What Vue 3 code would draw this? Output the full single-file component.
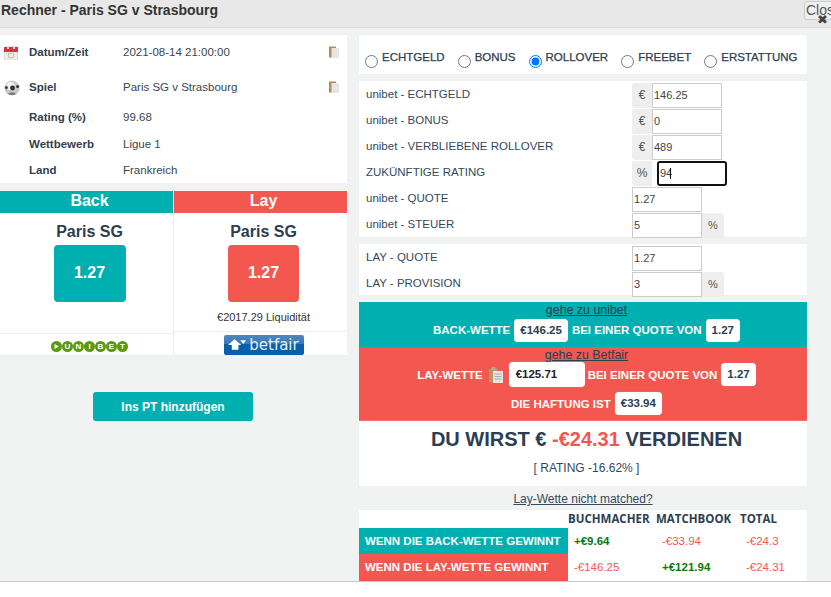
<template>
  <div class="page">
    <div class="modal">
      <header class="head">
        <h1 class="title">Rechner - Paris SG v Strasbourg</h1>
        <button class="close">Close</button>
        <span class="close-x">✖</span>
      </header>

      <div class="content">
        <div class="left">
          <section class="card info">
            <div v-for="row in infoRows" :key="row.label" :class="['info-row', row.cls]">
              <span class="info-icon">
                <svg v-if="row.icon === 'cal'" width="14" height="14" viewBox="0 0 14 14">
                  <rect x="0.5" y="1" width="13" height="13" fill="#eeeae6" stroke="#ccc" stroke-width="0.6" />
                  <rect x="0" y="1" width="14" height="5" fill="#d8333c" />
                  <rect x="3" y="0" width="2" height="3" fill="#f3d4d4" />
                  <rect x="9" y="0" width="2" height="3" fill="#f3d4d4" />
                  <rect x="4.5" y="7.5" width="5" height="4" fill="none" stroke="#bbb" stroke-width="0.8" />
                </svg>
                <svg v-if="row.icon === 'ball'" width="16" height="16" viewBox="0 0 16 16">
                  <circle cx="8" cy="8" r="7.5" fill="#c9c9c9" />
                  <circle cx="6.5" cy="6" r="4" fill="#f1f1f1" />
                  <circle cx="8.5" cy="8" r="2.4" fill="#2e2e2e" />
                  <circle cx="2.4" cy="7.4" r="1.5" fill="#3a3a3a" />
                  <circle cx="13.6" cy="6.5" r="1.6" fill="#3a3a3a" />
                  <path d="M4 14 Q8 16 12 14 L10 12.4 H6 Z" fill="#777" />
                </svg>
              </span>
              <span class="info-label">{{ row.label }}</span>
              <span class="info-value">{{ row.value }}</span>
              <svg v-if="row.copy" class="copy" width="10" height="12" viewBox="0 0 10 12">
                <rect x="0" y="0.5" width="7" height="11" fill="#b58a61" />
                <rect x="2.5" y="2" width="7.5" height="10" fill="#e6e6e6" />
              </svg>
            </div>
          </section>

          <section class="bets">
            <div class="bet">
              <div class="bet-head back">Back</div>
              <div class="bet-body">
                <div class="bet-team">Paris SG</div>
                <div class="odd back">1.27</div>
              </div>
              <div class="bet-logo">
                <div class="unibet">
                  <svg width="11" height="11" viewBox="0 0 11 11" class="uni-play">
                    <circle cx="5.5" cy="5.5" r="5.5" fill="#5a9a0c" />
                    <path d="M3.5 3 L8 5.5 L3.5 8 Z" fill="#fff" />
                  </svg>
                  <span v-for="(ch, i) in 'UNIBET'" :key="i" class="uni-dot">{{ ch }}</span>
                </div>
              </div>
            </div>
            <div class="bet">
              <div class="bet-head lay">Lay</div>
              <div class="bet-body">
                <div class="bet-team">Paris SG</div>
                <div class="odd lay">1.27</div>
                <div class="liq">€2017.29 Liquidität</div>
              </div>
              <div class="bet-logo">
                <div class="betfair">
                  <svg width="19" height="12" viewBox="0 0 20 12">
                    <path d="M0 6 L7 0 L14 6 H11 V11 H4 V6 Z" fill="#fff" />
                    <path d="M13 1 H19 L16 5 Z" fill="#fff" />
                  </svg>
                  <span>betfair</span>
                </div>
              </div>
            </div>
          </section>

          <div class="add-wrap">
            <button class="add">Ins PT hinzufügen</button>
          </div>
        </div>

        <div class="right">
          <section class="card radios">
            <label v-for="t in types" :key="t" class="radio">
              <input type="radio" name="type" :checked="t === 'ROLLOVER'" />
              <span>{{ t }}</span>
            </label>
          </section>

          <section class="card form">
            <div v-for="f in bookieFields" :key="f.label" class="form-row">
              <span class="form-label">{{ f.label }}</span>
              <div class="group">
                <span v-if="f.pre" class="addon pre">{{ f.pre }}</span>
                <span v-if="f.focus" class="focus-wrap">
                  <input class="field focused" :value="f.value" />
                  <i class="caret"></i>
                </span>
                <input v-else class="field" :value="f.value" />
                <span v-if="f.post" class="addon post">{{ f.post }}</span>
              </div>
            </div>
          </section>

          <section class="card form lay-form">
            <div v-for="f in layFields" :key="f.label" class="form-row">
              <span class="form-label">{{ f.label }}</span>
              <div class="group">
                <input class="field" :value="f.value" />
                <span v-if="f.post" class="addon post">{{ f.post }}</span>
              </div>
            </div>
          </section>

          <section class="band back-band">
            <a class="go">gehe zu unibet</a>
            <div class="band-line">
              <span>BACK-WETTE</span>
              <b class="pill">€146.25</b>
              <span>BEI EINER QUOTE VON</span>
              <b class="pill">1.27</b>
            </div>
          </section>

          <section class="band lay-band">
            <a class="go">gehe zu Betfair</a>
            <div class="band-line">
              <span>LAY-WETTE</span>
              <svg class="clip" width="14" height="16" viewBox="0 0 14 16">
                <rect x="0" y="1.5" width="9" height="14" fill="#c2915f" />
                <rect x="2.5" y="0" width="4" height="3" fill="#a9a9a9" />
                <rect x="4" y="4" width="10" height="12" fill="#e4e6e6" />
                <path d="M5.5 7 H12.5 M5.5 9.5 H12.5 M5.5 12 H12.5" stroke="#a8acac" stroke-width="1" />
              </svg>
              <b class="pill wide">€125.71</b>
              <span>BEI EINER QUOTE VON</span>
              <b class="pill">1.27</b>
            </div>
            <div class="band-line liab">
              <span>DIE HAFTUNG IST</span>
              <b class="pill">€33.94</b>
            </div>
          </section>

          <section class="result">
            <div class="earn">DU WIRST € <span class="neg">-€24.31</span> VERDIENEN</div>
            <div class="rating">[ RATING -16.62% ]</div>
          </section>

          <a class="unmatched">Lay-Wette nicht matched?</a>

          <section class="outcomes">
            <div class="o-head"></div>
            <div class="o-head">BUCHMACHER</div>
            <div class="o-head">MATCHBOOK</div>
            <div class="o-head">TOTAL</div>

            <div class="o-label back">WENN DIE BACK-WETTE GEWINNT</div>
            <div class="o-val pos">+€9.64</div>
            <div class="o-val neg">-€33.94</div>
            <div class="o-val neg">-€24.3</div>

            <div class="o-label lay">WENN DIE LAY-WETTE GEWINNT</div>
            <div class="o-val neg">-€146.25</div>
            <div class="o-val pos">+€121.94</div>
            <div class="o-val neg">-€24.31</div>
          </section>
        </div>
      </div>
    </div>
  </div>
</template>

<script setup>
const infoRows = [
  { label: 'Datum/Zeit', value: '2021-08-14 21:00:00', icon: 'cal', copy: true, cls: 'tall' },
  { label: 'Spiel', value: 'Paris SG v Strasbourg', icon: 'ball', copy: true, cls: 'tall' },
  { label: 'Rating (%)', value: '99.68', cls: 'third' },
  { label: 'Wettbewerb', value: 'Ligue 1' },
  { label: 'Land', value: 'Frankreich' },
]

const types = ['ECHTGELD', 'BONUS', 'ROLLOVER', 'FREEBET', 'ERSTATTUNG']

const bookieFields = [
  { label: 'unibet - ECHTGELD', value: '146.25', pre: '€' },
  { label: 'unibet - BONUS', value: '0', pre: '€' },
  { label: 'unibet - VERBLIEBENE ROLLOVER', value: '489', pre: '€' },
  { label: 'ZUKÜNFTIGE RATING', value: '94', pre: '%', focus: true },
  { label: 'unibet - QUOTE', value: '1.27' },
  { label: 'unibet - STEUER', value: '5', post: '%' },
]

const layFields = [
  { label: 'LAY - QUOTE', value: '1.27' },
  { label: 'LAY - PROVISION', value: '3', post: '%' },
]
</script>

<style>
html,
body {
  margin: 0;
  background: #fff;
  overflow: hidden;
}
</style>

<style scoped>
.page {
  width: 831px;
  height: 597px;
  overflow: hidden;
  background: #fff;
  font-family: 'Liberation Sans', Arial, sans-serif;
  font-size: 11.5px;
  color: #2c3e50;
}

.modal {
  height: 582px;
  overflow: hidden;
  background: #f1f3f3;
  border-bottom: 1px solid #c8c8c8;
  box-sizing: border-box;
}

.head {
  position: relative;
  display: flex;
  height: 28px;
  box-sizing: border-box;
  background: #e8e8e8;
  border-bottom: 1px solid #dcdcdc;
}

.title {
  width: 804px;
  flex: none;
  margin: 0;
  padding: 1px 0 0 1px;
  box-sizing: border-box;
  font-size: 14px;
  line-height: 18px;
  font-weight: bold;
  color: #333;
}

.close {
  flex: none;
  width: 50px;
  height: 19px;
  margin-top: 1px;
  padding: 0 1px;
  text-align: left;
  font-family: 'Liberation Sans', Arial, sans-serif;
  font-size: 14px;
  line-height: 17px;
  color: #555;
  background: #f0f0f0;
  border: 1px solid #ccc;
  border-radius: 3px;
}

.close-x {
  position: absolute;
  left: 817px;
  top: 13px;
  font-family: 'DejaVu Sans', sans-serif;
  font-size: 13px;
  line-height: 14px;
  color: #444;
}

.content {
  display: flex;
  gap: 12px;
  padding-top: 7px;
}

.left {
  width: 347px;
  flex: none;
}

.right {
  width: 448px;
  flex: none;
}

.card {
  background: #fff;
  box-sizing: border-box;
  box-shadow: 0 0 1px #e3e5e5;
}

.info {
  height: 148px;
  margin-bottom: 8px;
}

.info-row {
  position: relative;
  display: flex;
  align-items: center;
  height: 26px;
  padding-left: 29px;
  color: #34495e;
}

.info-row.tall {
  height: 35px;
}

.info-row.third {
  margin-bottom: 1px;
}

.info-icon {
  position: absolute;
  left: 4px;
  top: 50%;
  transform: translateY(-50%);
  display: flex;
}

.info-label {
  width: 94px;
  padding-bottom: 2px;
  font-weight: bold;
  color: #333f4d;
}

.info-value {
  padding-bottom: 2px;
  color: #3a4654;
}

.copy {
  position: absolute;
  left: 329px;
  top: 11px;
}

.bets {
  display: flex;
  gap: 1px;
  background: #eceeee;
  height: 165px;
}

.bet {
  display: flex;
  flex-direction: column;
  width: 173px;
  background: #fff;
}

.bet-head {
  height: 22px;
  line-height: 20px;
  margin-bottom: 2px;
  padding-left: 6px;
  text-align: center;
  font-size: 16px;
  font-weight: bold;
  color: #fff;
}

.back {
  background: #00afaf;
}

.lay {
  background: #f4574f;
}

.bet-body {
  height: 119px;
  box-sizing: border-box;
  padding: 8px 0 0 6px;
  border-bottom: 1px solid #eceeee;
  display: flex;
  flex-direction: column;
  align-items: center;
}

.bet-team {
  font-size: 16px;
  line-height: 18px;
  font-weight: bold;
  color: #2c3e50;
}

.odd {
  width: 72px;
  height: 57px;
  margin-top: 4px;
  line-height: 55px;
  border-radius: 4px;
  text-align: center;
  font-size: 16px;
  font-weight: bold;
  color: #fff;
}

.odd.lay {
  width: 71px;
}

.liq {
  margin-top: 8px;
  font-size: 11px;
  line-height: 14px;
  color: #333;
}

.bet-logo {
  flex: 1;
  display: flex;
  justify-content: center;
  align-items: center;
  padding-left: 6px;
  border-bottom: 1px solid #eceeee;
}

.unibet {
  display: flex;
  width: 78px;
  height: 12px;
  margin-top: 4px;
  justify-content: center;
  align-items: center;
}

.uni-play {
  flex: none;
}

.uni-dot {
  width: 11px;
  height: 11px;
  line-height: 11px;
  flex: none;
  border-radius: 50%;
  text-align: center;
  background: #5a9a0c;
  color: #fff;
  font-size: 8px;
  font-weight: bold;
}

.betfair {
  display: flex;
  align-items: center;
  justify-content: center;
  gap: 2px;
  width: 80px;
  height: 20px;
  margin-top: 3px;
  border-radius: 2px;
  background: linear-gradient(#4f87bd 0, #3a79b6 45%, #0a5dab 46%);
  color: #e6f0fa;
  line-height: 20px;
  font-family: 'DejaVu Sans', sans-serif;
}

.betfair span {
  font-size: 15px;
}

.add-wrap {
  display: flex;
  justify-content: center;
  padding: 36px 1px 0 0;
}

.add {
  width: 160px;
  height: 29px;
  border: 0;
  border-radius: 3px;
  background: #00afaf;
  color: #fff;
  font-family: 'Liberation Sans', Arial, sans-serif;
  font-size: 12px;
  font-weight: bold;
}

.radios {
  display: flex;
  height: 39px;
  padding: 16px 0 0 6px;
  margin-bottom: 7px;
}

.radio {
  display: flex;
  align-items: flex-start;
  margin-right: 13px;
  color: #2c3e50;
  -webkit-text-stroke: 0.25px #2c3e50;
}

.radio input {
  width: 13px;
  height: 13px;
  margin: 4px 4px 0 0;
}

.form {
  height: 156px;
  padding-top: 1px;
  margin-bottom: 7px;
}

.form.lay-form {
  height: 51px;
}

.form-row {
  display: flex;
  align-items: center;
  height: 26px;
}

.form-label {
  width: 273px;
  flex: none;
  padding: 0 0 3px 7px;
  box-sizing: border-box;
  color: #34495e;
}

.group {
  display: flex;
  align-items: stretch;
  height: 25px;
}

.addon {
  width: 20px;
  display: flex;
  align-items: center;
  justify-content: center;
  background: #eee;
  color: #555;
  font-size: 11px;
  border-radius: 3px 0 0 3px;
}

.addon.pre {
  font-size: 12px;
}

.addon.post {
  width: 22px;
  border-radius: 0 3px 3px 0;
}

.field {
  width: 70px;
  height: 25px;
  padding: 0 1px;
  margin: 0;
  box-sizing: border-box;
  border: 1px solid #ccc;
  font-family: 'Liberation Sans', Arial, sans-serif;
  font-size: 11px;
  color: #444;
  background: #fff;
  outline: none;
}

.focus-wrap {
  position: relative;
  display: flex;
  margin-left: 5px;
}

.field.focused {
  border: 2px solid #111;
  border-radius: 3px;
}

.caret {
  position: absolute;
  left: 13px;
  top: 7px;
  width: 1px;
  height: 11px;
  background: #111;
}

.band {
  padding-left: 7px;
  text-align: center;
  color: #fff;
  font-weight: bold;
}

.back-band {
  height: 45px;
  background: #00afaf;
}

.lay-band {
  height: 74px;
  background: #f4574f;
}

.go {
  display: block;
  padding-top: 2px;
  height: 13px;
  line-height: 13px;
  font-size: 12.4px;
  color: #2c3e50;
  font-weight: normal;
  text-decoration: underline;
}

.band-line {
  display: flex;
  justify-content: center;
  align-items: center;
  gap: 4px;
  height: 26px;
  color: #fff;
}

.lay-band .band-line {
  height: 25px;
}

.lay-band .liab {
  height: 33px;
}

.pill {
  display: block;
  padding: 0 6px;
  height: 23px;
  line-height: 23px;
  background: #fff;
  border-radius: 4px;
  color: #2c3e50;
  box-shadow: 0 0 1px #9fb2b2;
}

.pill.wide {
  width: 76px;
  height: 25px;
  line-height: 25px;
  box-sizing: border-box;
  padding: 0 0 0 7px;
  text-align: left;
  color: #222;
  margin-right: -1px;
}

.clip {
  margin-left: 2px;
  margin-right: 2px;
}

.result {
  height: 65px;
  padding-left: 7px;
  background: #fff;
  text-align: center;
  box-shadow: 0 0 1px #e3e5e5;
}

.earn {
  padding-top: 5px;
  font-size: 20px;
  line-height: 27px;
  font-weight: bold;
  color: #2c3e50;
}

.neg {
  color: #f4574f;
}

.pos {
  color: #0a7a0a;
  font-weight: bold;
}

.rating {
  padding-top: 8px;
  font-size: 12px;
  line-height: 14px;
  color: #34495e;
}

.unmatched {
  display: block;
  height: 24px;
  padding-top: 6px;
  box-sizing: border-box;
  font-size: 12px;
  line-height: 14px;
  text-align: center;
  text-decoration: underline;
  color: #34495e;
}

.outcomes {
  display: grid;
  grid-template-columns: 209px 88px 84px 67px;
  grid-template-rows: 18px 26px 27px;
  background: #fff;
  box-shadow: 0 0 1px #e3e5e5;
}

.o-head {
  font-family: 'Open Sans', sans-serif;
  font-weight: 700;
  font-size: 11.5px;
  line-height: 18px;
  color: #2c3e50;
  white-space: nowrap;
}

.o-label {
  padding-left: 6px;
  line-height: 26px;
  font-weight: bold;
  white-space: nowrap;
  color: #fff;
}

.o-val {
  padding-left: 6px;
  line-height: 26px;
}
</style>
